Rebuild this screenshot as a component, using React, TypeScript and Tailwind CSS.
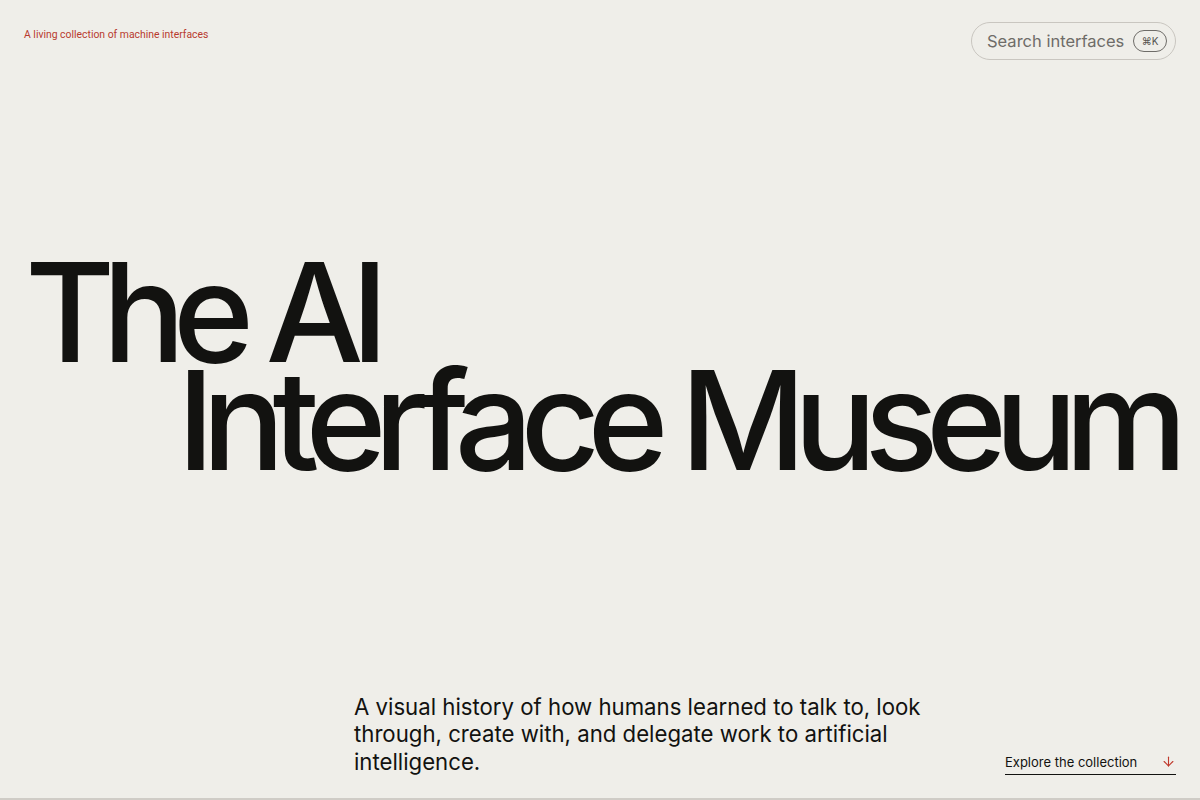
import { ArrowDown } from "lucide-react";

export default function App() {
  return (
    <div className="flex h-[800px] w-full flex-col overflow-hidden border-b-2 border-[#cfccc6] bg-[#efeee9] font-['Inter',sans-serif] text-[#121210]">
      <header className="flex items-start justify-between px-6 pt-[22px]">
        <p className="pt-[5px] font-['Roboto',sans-serif] text-[10.4px] text-[#b83a2e]">
          A living collection of machine interfaces
        </p>
        <button className="flex h-[38px] w-[205px] items-center justify-between rounded-full border border-[#c9c6c0] pl-[15px] pr-[8px] text-[16.5px] text-[#6e6c68]">
          <span className="pt-[1px]">Search interfaces</span>
          <span className="flex h-[22px] w-[34px] items-center justify-center rounded-full border border-[#6e6c68] text-[10px] text-[#555350]">
            ⌘K
          </span>
        </button>
      </header>

      <h1 className="mt-[198px] whitespace-nowrap text-[138px] font-medium leading-[108px] tracking-[-0.091em]">
        <span className="block pl-[25px]">The AI</span>
        <span className="block pl-[177px]">Interface Museum</span>
      </h1>

      <div className="mt-auto flex items-end justify-between pb-[23px] pl-[354px] pr-6">
        <p className="w-[590px] text-[22.2px] leading-[27.5px]">
          A visual history of how humans learned to talk to, look through, create with, and delegate work to artificial
          intelligence.
        </p>
        <a className="flex w-[171px] items-center justify-between border-b border-[#121210] pb-[2px] text-[13px]">
          <span className="pt-[1px]">Explore the collection</span>
          <ArrowDown className="h-[15px] w-[15px] text-[#c0392b]" strokeWidth={1.75} />
        </a>
      </div>
    </div>
  );
}
